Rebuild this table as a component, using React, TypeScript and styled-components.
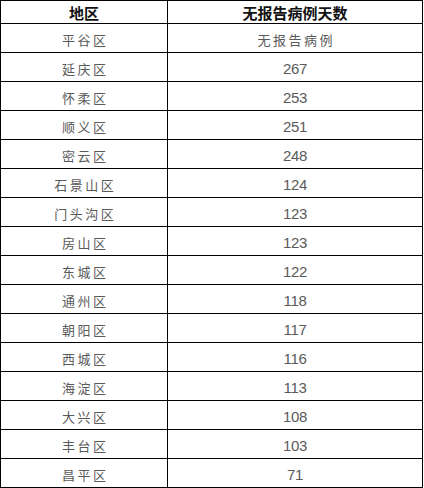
import styled, { createGlobalStyle } from "styled-components";

const GlobalStyle = createGlobalStyle`
  html, body {
    margin: 0;
    padding: 0;
    background: #ffffff;
  }
`;

const rows: [string, string][] = [
  ["平谷区", "无报告病例"],
  ["延庆区", "267"],
  ["怀柔区", "253"],
  ["顺义区", "251"],
  ["密云区", "248"],
  ["石景山区", "124"],
  ["门头沟区", "123"],
  ["房山区", "123"],
  ["东城区", "122"],
  ["通州区", "118"],
  ["朝阳区", "117"],
  ["西城区", "116"],
  ["海淀区", "113"],
  ["大兴区", "108"],
  ["丰台区", "103"],
  ["昌平区", "71"],
];

const Table = styled.table`
  border-collapse: collapse;
  width: 423px;
  height: 488px;
  table-layout: fixed;
  margin: 0;
`;

const HeadCell = styled.th<{ $w?: number }>`
  border: 1px solid #000;
  padding: 1px 0 0 0;
  width: ${(p) => (p.$w ? `${p.$w}px` : "auto")};
  text-align: center;
  vertical-align: middle;
  font-family: "Noto Sans CJK SC", sans-serif;
  font-weight: 700;
  font-size: 15px;
  color: #111;
`;

const Cell = styled.td<{ $num?: boolean }>`
  border: 1px solid #000;
  padding: 2px 0 0 0;
  text-align: center;
  vertical-align: middle;
  color: #5a5a5a;
  font-family: ${(p) =>
    p.$num
      ? `"Liberation Sans", Arial, sans-serif`
      : `"Noto Sans CJK SC", sans-serif`};
  font-size: ${(p) => (p.$num ? "15px" : "13px")};
  letter-spacing: ${(p) => (p.$num ? "-0.3px" : "2.5px")};
  text-indent: ${(p) => (p.$num ? "0" : "2.5px")};
`;

const isNumber = (v: string) => /^\d+$/.test(v);

export default function App() {
  return (
    <>
      <GlobalStyle />
      <Table>
        <thead>
          <tr>
            <HeadCell $w={166}>地区</HeadCell>
            <HeadCell>无报告病例天数</HeadCell>
          </tr>
        </thead>
        <tbody>
          {rows.map(([area, days]) => (
            <tr key={area}>
              <Cell>{area}</Cell>
              <Cell $num={isNumber(days)}>{days}</Cell>
            </tr>
          ))}
        </tbody>
      </Table>
    </>
  );
}
